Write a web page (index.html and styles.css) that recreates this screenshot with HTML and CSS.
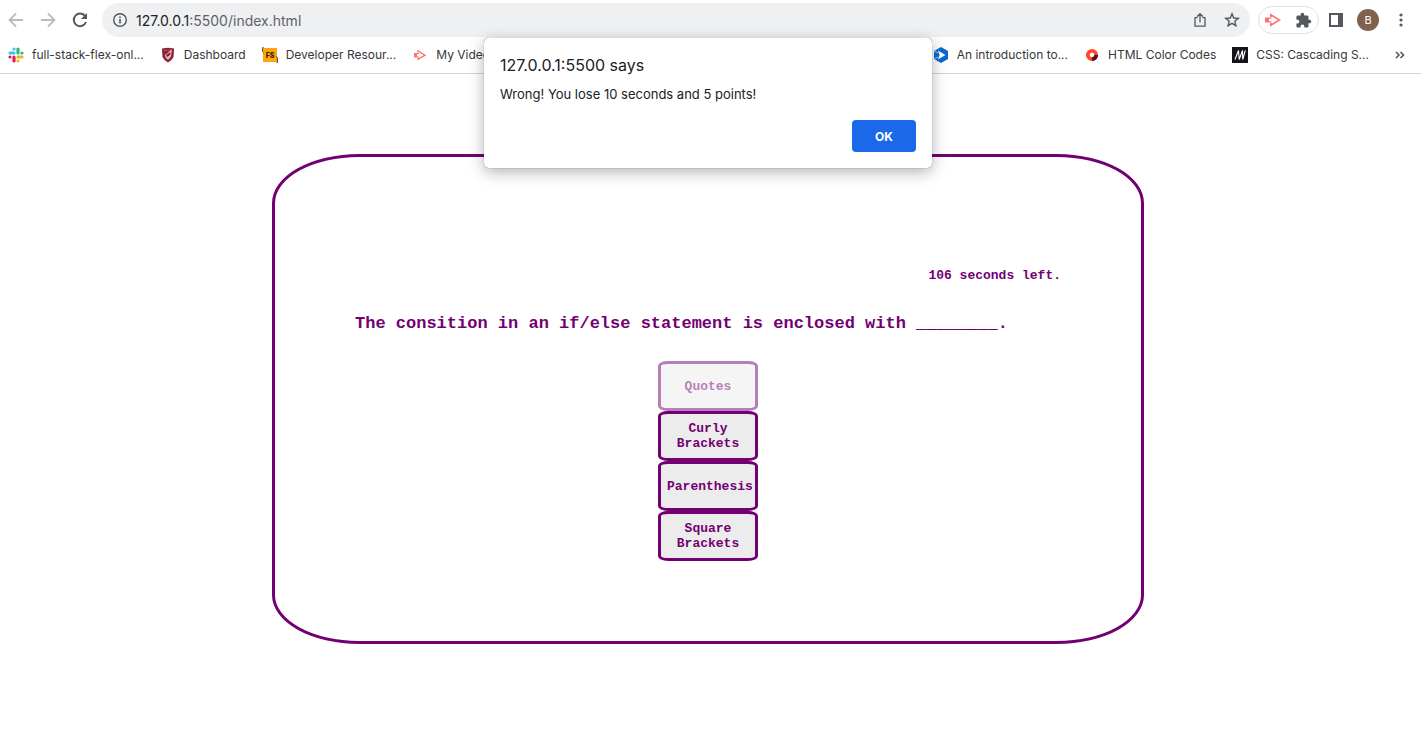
FILE: index.html
```html
<!DOCTYPE html>
<html lang="en">
<head>
<meta charset="utf-8">
<meta name="viewport" content="width=device-width, initial-scale=1">
<title>Quiz</title>
<link rel="stylesheet" href="styles.css">
</head>
<body>
<header class="browser">
  <div class="toolbar">
    <div class="nav">
      <button class="icon-btn faded" aria-label="Back"><svg width="16" height="16" viewBox="0 0 16 16"><path d="M15 8H2M8 1.500 1.500 8 8 14.500" fill="none" stroke="currentColor" stroke-width="1.800"/></svg></button>
      <button class="icon-btn faded" aria-label="Forward"><svg width="16" height="16" viewBox="0 0 16 16"><path d="M1 8h13M8 1.500 14.500 8 8 14.500" fill="none" stroke="currentColor" stroke-width="1.800"/></svg></button>
      <button class="icon-btn" aria-label="Reload"><svg width="16" height="16" viewBox="0 0 16 16"><path d="M13.200 4.200A6.300 6.300 0 1 0 14 10" fill="none" stroke="currentColor" stroke-width="2"/><path d="M15 1v6H9z" fill="currentColor"/></svg></button>
    </div>
    <div class="omnibox">
      <svg width="16" height="16" viewBox="0 0 16 16"><circle cx="8" cy="8" r="6.300" fill="none" stroke="currentColor" stroke-width="1.400"/><path d="M7.200 7h1.600v4.400H7.200zM7.200 4.400h1.600V6H7.200z" fill="currentColor"/></svg>
      <a class="url" href="#"><span class="host">127.0.0.1</span>:5500/index.html</a>
      <button class="icon-btn share" aria-label="Share"><svg width="16" height="16" viewBox="0 0 16 16"><path d="M5.500 5.600H3v8.600h10V5.600h-2.500M8 10.500V2M5 4.700 8 1.700l3 3" fill="none" stroke="currentColor" stroke-width="1.300" stroke-linejoin="round"/></svg></button>
      <button class="icon-btn" aria-label="Bookmark"><svg width="16" height="16" viewBox="0 0 16 16"><path d="m8 1.800 1.700 4.200 4.600.3-3.500 2.900 1.100 4.500L8 11.300l-3.900 2.400 1.100-4.500L1.700 6.300 6.300 6z" fill="none" stroke="currentColor" stroke-width="1.400"/></svg></button>
    </div>
    <div class="extensions">
      <button class="icon-btn coral" aria-label="Recorder"><svg width="16" height="14" viewBox="0 0 16 14"><path d="M0 4.500h4v5H0z" fill="currentColor"/><path d="M5.800 4V1.800L14.500 7l-8.700 5.200V10" fill="none" stroke="currentColor" stroke-width="1.700"/><path d="M4 4.500h2.500v1.200H4zM4 8.300h2.500v1.200H4z" fill="currentColor"/></svg></button>
      <button class="icon-btn" aria-label="Extensions"><svg width="17" height="17" viewBox="0 0 24 24"><path fill="currentColor" d="M20.500 11H19V7c0-1.100-.9-2-2-2h-4V3.500a2.500 2.500 0 0 0-5 0V5H4c-1.100 0-2 .9-2 2v3.800h1.500a2.700 2.700 0 0 1 0 5.400H2V20c0 1.100.9 2 2 2h3.800v-1.500a2.700 2.700 0 0 1 5.400 0V22H17c1.100 0 2-.9 2-2v-4h1.500a2.500 2.500 0 0 0 0-5z"/></svg></button>
    </div>
    <button class="icon-btn panel" aria-label="Side panel"><svg width="14" height="14" viewBox="0 0 14 14"><path d="M1 1h12v12H1z" fill="none" stroke="currentColor" stroke-width="2"/><path d="M9 1h5v12H9z" fill="currentColor"/></svg></button>
    <button class="avatar" aria-label="Profile">B</button>
    <button class="icon-btn menu" aria-label="Menu"><svg width="4" height="14" viewBox="0 0 4 14"><g fill="currentColor"><circle cx="2" cy="2" r="1.600"/><circle cx="2" cy="7" r="1.600"/><circle cx="2" cy="12" r="1.600"/></g></svg></button>
  </div>
  <nav class="bookmarks" aria-label="Bookmarks">
    <a href="#"><svg width="16" height="16" viewBox="0 0 16 16"><g stroke-width="3.200" stroke-linecap="round"><path d="M6 2v0M2 6h4" stroke="#36c5f0"/><path d="M10 2v4M14 6v0" stroke="#2eb67d"/><path d="M10 10h4M10 14v0" stroke="#ecb22e"/><path d="M6 10v4M2 10v0" stroke="#e01e5a"/></g></svg>full-stack-flex-onl...</a>
    <a href="#"><svg width="16" height="16" viewBox="0 0 16 16"><path d="M2 1.500 8 .7l6 .8-.5 8.500Q12 13.500 8 15.500 4 13.500 2.500 10z" fill="#8a1f30"/><path d="M4 3l8-.3-1 7-3 3.200-2.500-2.500z" fill="#d9b8bd"/><path d="M4 3.500 10.500 3 7 6.500 4.500 8zM6 8l4.500-3L10 8 7 10z" fill="#8a1f30"/></svg>Dashboard</a>
    <a href="#"><svg width="16" height="16" viewBox="0 0 16 16"><path d="M1 1h14v14H1z" fill="#ffa50a"/><path d="M1.500.5H.5v4l1 1M14.500 9.500l1 1.500v4.500h-1" fill="none" stroke="#222" stroke-width=".8"/><text x="8" y="11" text-anchor="middle" class="fs-mark">FS</text></svg>Developer Resour...</a>
    <a class="videos" href="#"><svg class="coral" width="16" height="16" viewBox="0 0 16 16"><path d="M2 6h3v4.500H2z" fill="currentColor"/><path d="M6 5.500V4l7 4.200-7 4.100v-1.500" fill="none" stroke="currentColor" stroke-width="1.400"/><path d="M5 6h2v1H5zM5 9.500h2v1H5z" fill="currentColor"/></svg>My Videos</a>
    <a class="intro" href="#"><svg width="16" height="16" viewBox="0 0 16 16"><path d="m8 0 7 4v8l-7 4-7-4V4z" fill="#0969d2"/><path d="M5 3.500 12.500 8 5 12.500l1.500-4.500z" fill="#fff"/><path d="m1 4 4 2M1 12l4-2" stroke="#fff" stroke-width=".7"/></svg>An introduction to...</a>
    <a href="#"><svg width="16" height="16" viewBox="0 0 16 16"><circle cx="8" cy="8" r="4.200" fill="none" stroke="#ff4b2b" stroke-width="3.800"/><path d="M12.200 8A4.200 4.200 0 0 1 8 12.200" fill="none" stroke="#5a0d35" stroke-width="3.800"/></svg>HTML Color Codes</a>
    <a href="#"><svg width="16" height="16" viewBox="0 0 16 16"><path d="M0 0h16v16H0z" fill="#15141a"/><path d="M3 12.500 6.500 3.500l.7 9 3.300-9 .2 9 2.600-9" fill="none" stroke="#fff" stroke-width="1.100"/></svg>CSS: Cascading S...</a>
    <button class="icon-btn more" aria-label="More bookmarks"><svg width="10" height="8" viewBox="0 0 10 8"><path d="m1 1 3 3-3 3m4.500-6 3 3-3 3" fill="none" stroke="currentColor" stroke-width="1.600"/></svg></button>
  </nav>
</header>
<main class="page">
  <section class="quiz">
    <p class="timer">106 seconds left.</p>
    <h1 class="question">The consition in an if/else statement is enclosed with ________.</h1>
    <div class="answers">
      <button class="answer" disabled>Quotes</button>
      <button class="answer">Curly Brackets</button>
      <button class="answer">Parenthesis</button>
      <button class="answer">Square Brackets</button>
    </div>
  </section>
</main>
<div class="alert" role="alertdialog" aria-labelledby="alert-title" aria-describedby="alert-text">
  <h2 id="alert-title">127.0.0.1:5500 says</h2>
  <p id="alert-text">Wrong! You lose 10 seconds and 5 points!</p>
  <button class="ok">OK</button>
</div>
</body>
</html>
```
FILE: styles.css
```css
* { box-sizing: border-box; }

body {
  margin: 0;
  position: relative;
  background: #fff;
  font-family: Inter, "Liberation Sans", sans-serif;
}

button { font-family: inherit; }
svg { display: block; flex: none; }

.icon-btn {
  display: flex;
  padding: 0;
  border: 0;
  background: none;
  color: #54575b;
}
.icon-btn.faded { color: #b9bbbe; }
.coral, .icon-btn.coral { color: #fd7572; }

.browser { border-bottom: 1px solid #d3d5d8; }

.toolbar {
  display: flex;
  align-items: center;
  height: 40px;
  padding: 0 18px 0 8px;
}
.nav { display: flex; gap: 16px; margin-right: 14px; }

.omnibox {
  display: flex;
  flex: 1;
  align-items: center;
  gap: 8px;
  height: 34px;
  padding: 0 10px;
  border-radius: 17px;
  background: #eff0f2;
  color: #54575b;
}
.url { color: #5f6368; font-size: 14px; text-decoration: none; }
.host { color: #202124; }
.share { margin-left: auto; margin-right: 8px; }

.extensions {
  display: flex;
  align-items: center;
  gap: 14px;
  height: 28px;
  margin-left: 8px;
  padding: 0 6px;
  border: 1px solid #dfe1e4;
  border-radius: 14px;
}
.panel { margin-left: 10px; }
.avatar {
  width: 22px;
  height: 22px;
  margin-left: 14px;
  padding: 0;
  border: 0;
  border-radius: 50%;
  background: #80604f;
  color: #fff;
  font-size: 11px;
}
.menu { margin-left: 20px; }

.bookmarks {
  display: flex;
  align-items: center;
  gap: 16px;
  height: 33px;
  padding: 0 16px 4px 8px;
}
.bookmarks a {
  display: flex;
  align-items: center;
  gap: 8px;
  color: #35373a;
  font-size: 12px;
  text-decoration: none;
  white-space: nowrap;
}
.bookmarks .intro { margin-left: auto; }
.more { margin-left: 10px; }
.fs-mark { fill: #222; font-size: 7px; font-weight: 800; }

.page { padding: 80px 5px 80px 0; }

.quiz {
  max-width: 872px;
  margin: 0 auto;
  padding: 80px;
  border: 3px solid #730073;
  border-radius: 10%;
  color: #730073;
  font-family: "Liberation Mono", "Courier New", monospace;
  font-weight: 700;
}
.timer {
  margin: 31px 0 30px;
  font-size: 13px;
  line-height: 16px;
  text-align: right;
}
.question {
  margin: 0 0 27px;
  font-size: 17px;
  line-height: 20px;
}
.answers { display: flex; flex-direction: column; align-items: center; }
.answer {
  width: 100px;
  height: 50px;
  padding: 0 6px;
  border: 3px solid #730073;
  border-radius: 10%;
  background: #ececec;
  color: #730073;
  font-size: 13px;
  font-weight: 700;
  line-height: 15px;
}
.answer:disabled { opacity: 0.5; }

.alert {
  position: absolute;
  top: 38px;
  left: 0;
  right: 5px;
  display: flex;
  flex-direction: column;
  width: 448px;
  margin: 0 auto;
  padding: 16px;
  border-radius: 5px;
  background: #fff;
  box-shadow: 0 0 1px rgba(0, 0, 0, 0.6), 0 4px 16px rgba(0, 0, 0, 0.3);
  color: #202124;
}
.alert h2 {
  margin: 0 0 9px;
  font-size: 16px;
  font-weight: 400;
  line-height: 22px;
}
.alert p { margin: 0; font-size: 13px; line-height: 18px; }
.ok {
  align-self: flex-end;
  width: 64px;
  height: 32px;
  margin-top: 17px;
  border: 0;
  border-radius: 4px;
  background: #1b68e8;
  color: #fff;
  font-size: 12px;
  font-weight: 700;
}
```
